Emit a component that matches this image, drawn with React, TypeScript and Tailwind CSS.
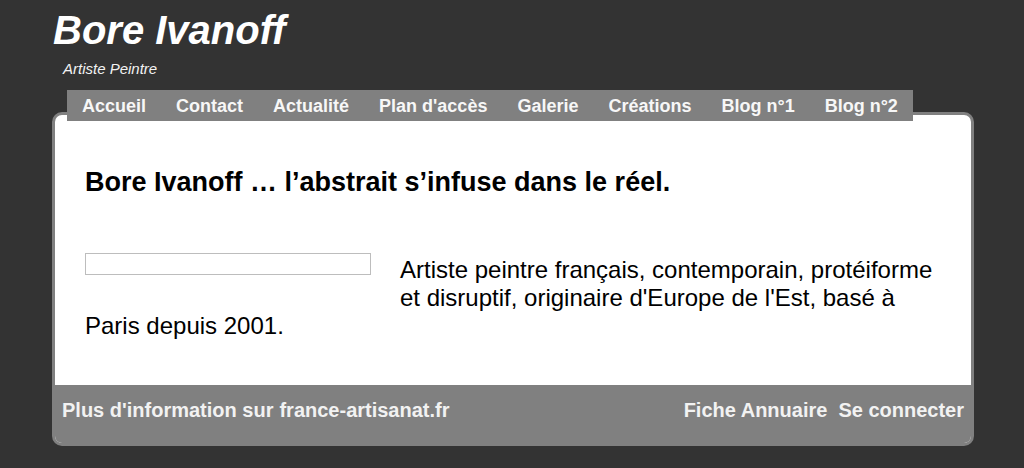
const navItems = ["Accueil", "Contact", "Actualité", "Plan d'accès", "Galerie", "Créations", "Blog n°1", "Blog n°2"]

export default function App() {
  return (
    <div className="min-h-screen bg-[#333333] font-['Liberation_Sans',Arial,sans-serif]">
      <div className="ml-[52px] w-[922px] pt-[7px]">
        {/* Header */}
        <header>
          <h1 className="pl-[1px] text-[40px] leading-[46px] font-bold italic text-white">Bore Ivanoff</h1>
          <p className="mt-[7px] pl-[11px] text-[15px] leading-[18px] italic text-[#f2f2f2]">Artiste Peintre</p>
        </header>

        {/* Menu */}
        <nav className="relative z-10 mt-[12px] ml-[15px] flex w-fit bg-[#808080]">
          {navItems.map((item) => (
            <a key={item} href="#" className="px-[15px] pt-[2px] text-[18px] leading-[29px] font-bold text-[#f7f7f7]">
              {item}
            </a>
          ))}
        </nav>

        {/* Contenu */}
        <div className="-mt-[9px] overflow-hidden rounded-[10px] border-[3px] border-[#808080] bg-white">
          <main className="px-[30px] pt-[52px] pb-[45px] text-black">
            <h2 className="text-[27px] leading-[30px] font-bold">Bore Ivanoff … l’abstrait s’infuse dans le réel.</h2>
            <div className="mt-[56px]">
              <div className="float-left mr-[29px] mb-[20px] h-[22px] w-[286px] border border-[#bdbdbd]" />
              <p className="pt-[3px] text-[24px] leading-[28px]">
                Artiste peintre français, contemporain, protéiforme et disruptif, originaire d'Europe de l'Est, basé à Paris depuis 2001.
              </p>
            </div>
          </main>

          <footer className="flex h-[58px] items-start justify-between bg-[#808080] px-[7px] pt-[13px] text-[20px] leading-[24px] font-bold text-[#f2f2f2]">
            <div className="flex gap-[6px]">
              <span>Plus d'information sur</span>
              <a href="#">france-artisanat.fr</a>
            </div>
            <div className="flex gap-[11px]">
              <a href="#">Fiche Annuaire</a>
              <a href="#">Se connecter</a>
            </div>
          </footer>
        </div>
      </div>
    </div>
  )
}
